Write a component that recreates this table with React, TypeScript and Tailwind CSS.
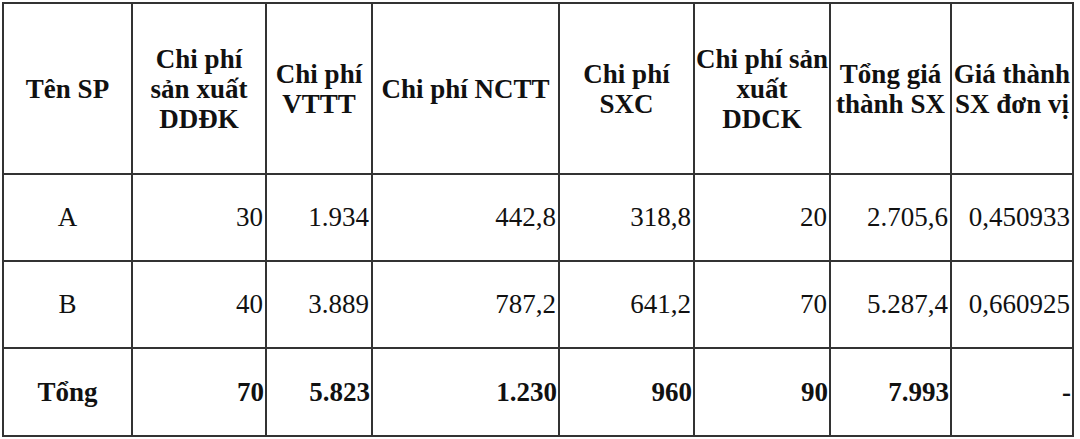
const headers = [
  ["Tên SP"],
  ["Chi phí", "sản xuất", "DDĐK"],
  ["Chi phí", "VTTT"],
  ["Chi phí NCTT"],
  ["Chi phí", "SXC"],
  ["Chi phí sản", "xuất", "DDCK"],
  ["Tổng giá", "thành SX"],
  ["Giá thành", "SX đơn vị"],
];

const rows = [
  { name: "A", values: ["30", "1.934", "442,8", "318,8", "20", "2.705,6", "0,450933"] },
  { name: "B", values: ["40", "3.889", "787,2", "641,2", "70", "5.287,4", "0,660925"] },
];

const total = { name: "Tổng", values: ["70", "5.823", "1.230", "960", "90", "7.993", "-"] };

const colWidths = ["w-[129px]", "w-[134px]", "w-[106px]", "w-[187px]", "w-[135px]", "w-[136px]", "w-[121px]", "w-[122px]"];

const App = () => {
  return (
    <div className="w-[1080px] h-[439px] bg-white pl-[2px] pt-[2px] font-['Liberation_Serif',serif] text-[27px] text-[#111]">
      <table className="table-fixed border-collapse w-[1071px]">
        <colgroup>
          {colWidths.map((w, i) => (
            <col key={i} className={w} />
          ))}
        </colgroup>
        <thead>
          <tr className="h-[171px]">
            {headers.map((lines, i) => (
              <th
                key={i}
                className="border-2 border-[#333] px-0 text-center align-middle font-bold leading-[30px] whitespace-nowrap"
              >
                {lines.map((line, j) => (
                  <div key={j}>{line}</div>
                ))}
              </th>
            ))}
          </tr>
        </thead>
        <tbody>
          {rows.map((row) => (
            <tr key={row.name} className="h-[87px]">
              <td className="border-2 border-[#333] text-center align-middle">{row.name}</td>
              {row.values.map((v, i) => (
                <td key={i} className="border-2 border-[#333] pr-[2px] text-right align-middle">
                  {v}
                </td>
              ))}
            </tr>
          ))}
          <tr className="h-[88px] font-bold">
            <td className="border-2 border-[#333] text-center align-middle">{total.name}</td>
            {total.values.map((v, i) => (
              <td key={i} className="border-2 border-[#333] pr-[1px] text-right align-middle">
                {v}
              </td>
            ))}
          </tr>
        </tbody>
      </table>
    </div>
  );
};

export default App;
